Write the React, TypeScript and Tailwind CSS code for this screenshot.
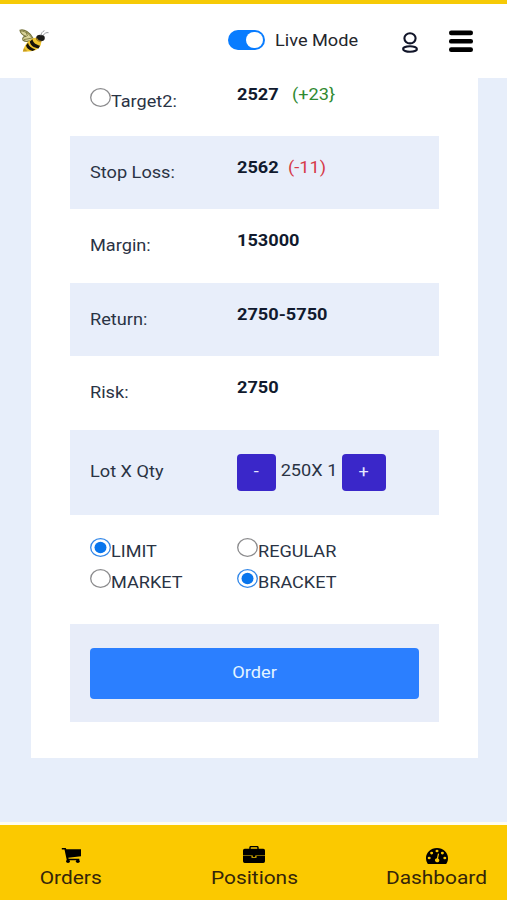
import type { ReactNode } from "react";

const summaryRows = [
  { label: "Stop Loss:", value: "2562", change: "(-11)", shaded: true },
  { label: "Margin:", value: "153000", shaded: false },
  { label: "Return:", value: "2750-5750", shaded: true },
  { label: "Risk:", value: "2750", shaded: false },
];

function BeeLogo() {
  return (
    <svg className="h-[26px] w-8" viewBox="0 0 32 26" fill="none">
      <path d="M14.500 11C11 4 5 1 1 2.200c.2 3.600 3 5 6.500 6.300C4.500 8 3 10 4 12.200c2.600 2 6.500 1.300 10.500-1.200Z" fill="#d9d39a" stroke="#77743c" strokeWidth="1.100" />
      <path d="M2 3c5 .2 8 3.500 11.500 7M5 11.500c3-.2 5-1 8-1.500M7 4l1.500 4" stroke="#7d793e" strokeWidth=".9" />
      <path d="M17 9.500c4 .6 6.300 4 4.500 8-2.300 5-9 6.600-17.500 6 1-6 5.500-12.500 13-14Z" fill="#f0c52d" />
      <path d="M13.500 11.300c.2 3 3 5.200 7.500 6.500l-1.500 2.700c-5-1-8-3-8.700-7ZM9 14.800c.5 3.200 3.300 5.300 7.500 6.600l-3 1.500c-4-1.300-6-3-6.500-5.500Z" fill="#17130b" />
      <path d="m5 20 3.500 3.300-4.700.3Z" fill="#c79a22" />
      <ellipse cx="21.500" cy="10" rx="4.300" ry="3.200" fill="#1c1b19" />
      <path d="M17.500 10.500c1 2.200 3 3.200 5 3" stroke="#b28b20" strokeWidth="1.500" />
      <path d="M22 7.500c.2-2.500 1.600-4 3.400-4.800M24 7.500c1.500-2.300 3.500-3.300 5.500-2.800" stroke="#999ca1" strokeWidth="1" />
    </svg>
  );
}

function CartIcon() {
  return (
    <svg className="h-[15px] w-5" viewBox="0 0 20 15">
      <path d="M.8 0h3.900l.7 1.300H20v6.900L7.300 9.700l.3 1H18.300v1.600H5.800L3.500 1.600H.8Z" />
      <ellipse cx="7" cy="13.300" rx="1.900" ry="1.700" />
      <ellipse cx="16.800" cy="13.300" rx="1.900" ry="1.700" />
    </svg>
  );
}

function BriefcaseIcon() {
  return (
    <svg className="h-[17px] w-[22px]" viewBox="0 0 22 17">
      <path d="M7 3V1.500Q7 .6 8.300.6h5.400Q15 .6 15 1.500V3" fill="none" stroke="#000" strokeWidth="1.400" />
      <path d="M1.700 2.800h18.600Q22 2.800 22 4.500v4.900H0V4.500Q0 2.800 1.700 2.800ZM0 10.100h8.500v1.700h5v-1.700H22v5.200q0 1.700-1.700 1.700H1.700Q0 17 0 15.300ZM9.700 9.400h2.600V11H9.700Z" />
    </svg>
  );
}

function GaugeIcon() {
  return (
    <svg className="h-4 w-[22px]" viewBox="0 0 22 16">
      <path d="M11 0c6.200 0 11 4.500 11 10.200 0 1.900-.5 3.700-1.500 5.200-.2.400-.6.600-1 .6h-17c-.4 0-.8-.2-1-.6A9.400 9.400 0 0 1 0 10.200C0 4.500 4.800 0 11 0Z" />
      <g fill="#fbc900">
        <ellipse cx="3.200" cy="10" rx="1.500" ry="1.300" />
        <ellipse cx="5.600" cy="5.100" rx="1.500" ry="1.300" />
        <ellipse cx="11" cy="3" rx="1.500" ry="1.300" />
        <ellipse cx="16.400" cy="5.100" rx="1.500" ry="1.300" />
        <ellipse cx="18.800" cy="10" rx="1.500" ry="1.300" />
        <path d="m11.900 5.500 1.200.3-1 4.700c1 .4 1.400 1.300 1.200 2.200-.3 1.200-1.500 1.800-2.700 1.500s-1.900-1.300-1.600-2.400c.2-.9 1-1.500 1.900-1.600Z" />
      </g>
    </svg>
  );
}

function Header() {
  return (
    <header className="flex h-[78px] shrink-0 border-t-4 border-[#f6ca06] bg-white pr-[34px] pl-[19px]">
      <div className="mt-6">
        <BeeLogo />
      </div>
      <div className="mt-[26px] ml-[177px] flex h-5 w-[37px] justify-end rounded-full bg-[#087cff] p-0.5">
        <span className="h-4 w-[17px] rounded-full bg-white" />
      </div>
      <span className="mt-[25px] ml-2.5 origin-left scale-x-[1.135] text-[16px] leading-6 whitespace-nowrap text-[#24262b]">
        Live Mode
      </span>
      <div className="mt-7 ml-auto flex gap-[31px]">
        <svg className="h-[22px] w-[17px]" viewBox="0 0 17 22" fill="none" stroke="#111529" strokeWidth="2.100">
          <ellipse cx="9" cy="6.300" rx="5.600" ry="5.100" />
          <ellipse cx="9" cy="17" rx="6.900" ry="2.700" />
        </svg>
        <svg className="-mt-0.5 h-[22px] w-6" viewBox="0 0 24 22" fill="#000">
          <rect y="0.500" width="24" height="4.700" rx="2.200" />
          <rect y="8.900" width="24" height="4.700" rx="2.200" />
          <rect y="17.300" width="24" height="4.700" rx="2.200" />
        </svg>
      </div>
    </header>
  );
}

function RadioOption({ label, checked = false }: { label: string; checked?: boolean }) {
  return (
    <div className="flex">
      <svg className="h-[19px] w-[21px] shrink-0" viewBox="0 0 21 19" fill="none">
        <ellipse cx="10.500" cy="9.500" rx="9.800" ry="8.800" fill="#fff" stroke={checked ? "#3287e8" : "#8b8b8d"} strokeWidth="1.300" />
        {checked && <ellipse cx="10.500" cy="9.500" rx="6" ry="5.700" fill="#0875ed" />}
      </svg>
      <span className="mt-0.5 -mb-px origin-left scale-x-[1.13] leading-6 whitespace-nowrap">{label}</span>
    </div>
  );
}

function StepButton({ children, className }: { children: ReactNode; className: string }) {
  return (
    <button className={`h-[37px] rounded-[4px] bg-[#3a27c9] text-[16px] text-[#e6e8ff] ${className}`}>
      <span className="inline-block scale-x-[1.13]">{children}</span>
    </button>
  );
}

function OrderForm() {
  return (
    <main className="mr-[29px] ml-[31px] h-[680px] bg-white px-[39px] text-[16px] text-[#2a3344]">
      <div className="grid h-[58px] grid-cols-[147px_1fr] pl-5">
        <div className="pt-2.5">
          <RadioOption label="Target2:" />
        </div>
        <div className="flex pt-[5px] leading-6">
          <span className="w-[55px] origin-left scale-x-[1.135] font-bold text-[#111a2e]">2527</span>
          <span className="origin-left scale-x-[1.135] text-[#2f8a32]">(+23&#125;</span>
        </div>
      </div>

      {summaryRows.map((row) => (
        <div
          key={row.label}
          className={`grid h-[73.4px] grid-cols-[147px_1fr] pl-5 leading-6 ${row.shaded ? "bg-[#e8eefa]" : ""}`}
        >
          <span className="origin-left scale-x-[1.135] pt-[25px]">{row.label}</span>
          <div className="flex pt-5">
            <span className="min-w-[51px] origin-left scale-x-[1.135] font-bold text-[#111a2e]">{row.value}</span>
            {row.change && <span className="origin-left scale-x-[1.135] text-[#d63a48]">{row.change}</span>}
          </div>
        </div>
      ))}

      <div className="grid h-[85.400px] grid-cols-[147px_1fr] items-center bg-[#e8eefa] pl-5">
        <span className="origin-left scale-x-[1.135]">Lot X Qty</span>
        <div className="flex items-center">
          <StepButton className="w-[39px]">-</StepButton>
          <span className="flex w-[66px] justify-center pb-0.5">
            <span className="scale-x-[1.135] whitespace-nowrap">250X 1</span>
          </span>
          <StepButton className="w-11">+</StepButton>
        </div>
      </div>

      <div className="grid h-[109px] grid-cols-[147px_1fr] content-start gap-y-1.5 pt-[23px] pl-5">
        <RadioOption label="LIMIT" checked />
        <RadioOption label="REGULAR" />
        <RadioOption label="MARKET" />
        <RadioOption label="BRACKET" checked />
      </div>

      <div className="h-[98px] bg-[#e8edf9] px-5 pt-6">
        <button className="h-[51px] w-full rounded-[4px] bg-[#2b7fff] text-[#e4f5ff]">
          <span className="inline-block scale-x-[1.135]">Order</span>
        </button>
      </div>
    </main>
  );
}

function BottomNav() {
  return (
    <nav className="mt-auto flex h-[78px] shrink-0 border-t-[3px] border-[#fffdf0] bg-[#fbc900] pl-10 text-[18px] leading-6 text-[#34250a]">
      <div className="flex w-[61px] flex-col items-center pt-[23px]">
        <CartIcon />
        <span className="mt-[3px] scale-x-[1.16] whitespace-nowrap">Orders</span>
      </div>
      <div className="ml-[110px] flex w-[86px] flex-col items-center pt-[21px]">
        <BriefcaseIcon />
        <span className="mt-[3px] scale-x-[1.16] whitespace-nowrap">Positions</span>
      </div>
      <div className="ml-[90px] flex w-[100px] flex-col items-center pt-[23px]">
        <GaugeIcon />
        <span className="mt-0.5 scale-x-[1.16] whitespace-nowrap">Dashboard</span>
      </div>
    </nav>
  );
}

export default function App() {
  return (
    <div className="flex h-[900px] w-[507px] flex-col overflow-hidden bg-[#e7eefa] font-['Roboto',sans-serif]">
      <Header />
      <OrderForm />
      <BottomNav />
    </div>
  );
}
